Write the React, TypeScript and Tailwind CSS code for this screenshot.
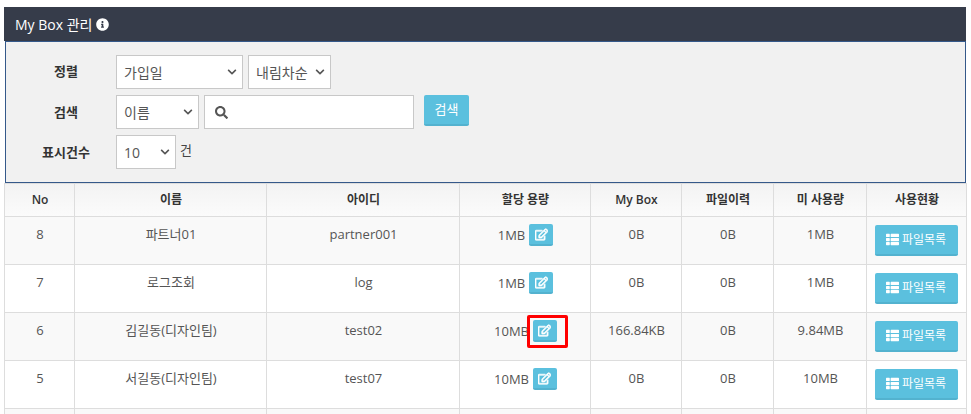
import { FaInfoCircle, FaSearch, FaChevronDown, FaThList, FaRegEdit } from "react-icons/fa";

const font = { fontFamily: '"Open Sans","Noto Sans CJK KR",sans-serif' };

function Sel({ label, w }: { label: string; w: string }) {
  return (
    <div className={`${w} h-[34px] flex items-center justify-between bg-white border border-[#c8c8c8] pl-[7px] pr-[5px] text-[14px] text-[#555]`}>
      <span>{label}</span>
      <FaChevronDown className="w-[10px] h-[10px] text-[#555]" />
    </div>
  );
}

const rows = [
  { no: "8", name: "파트너01", id: "partner001", quota: "1MB", box: "0B", hist: "0B", free: "1MB", alt: true },
  { no: "7", name: "로그조회", id: "log", quota: "1MB", box: "0B", hist: "0B", free: "1MB", alt: false },
  { no: "6", name: "김길동(디자인팀)", id: "test02", quota: "10MB", box: "166.84KB", hist: "0B", free: "9.84MB", alt: true, mark: true },
  { no: "5", name: "서길동(디자인팀)", id: "test07", quota: "10MB", box: "0B", hist: "0B", free: "10MB", alt: false },
];

const th = "border border-[#dddddd] font-semibold text-[12px] text-[#333] align-middle p-0 pl-[2px] h-[33px]";
const td = "border border-[#dddddd] text-[13px] text-[#555] align-top p-0 pt-[8px] text-center";
const tdText = `${td} pl-[2px]`;

export default function App() {
  return (
    <div style={font} className="w-[971px] h-[414px] overflow-hidden bg-white pt-[7px] pl-[4px]">
      <div className="w-[962px] h-[34px] bg-[#363c4a] text-white text-[14px] flex items-center gap-[4px] pl-[11px]">
        <span>My Box 관리</span>
        <FaInfoCircle className="w-[13px] h-[13px]" />
      </div>
      <div className="w-[961px] h-[142px] ml-px bg-[#f1f1f1] border border-[#35598a] pt-[13px] text-[#333]">
        <div className="flex flex-col gap-[6px]">
          <div className="flex items-center">
            <span className="w-[110px] text-center font-semibold text-[13px] pl-[10px] whitespace-nowrap">정렬</span>
            <div className="flex gap-[5px]">
              <Sel label="가입일" w="w-[127px]" />
              <Sel label="내림차순" w="w-[83px]" />
            </div>
          </div>
          <div className="flex items-center">
            <span className="w-[110px] text-center font-semibold text-[13px] pl-[10px] whitespace-nowrap pt-px">검색</span>
            <div className="flex gap-[5px] items-start">
              <Sel label="이름" w="w-[83px]" />
              <div className="w-[210px] h-[34px] bg-white border border-[#c8c8c8] flex items-center pl-[10px]">
                <FaSearch className="w-[13px] h-[13px] text-[#555]" />
              </div>
              <button className="ml-[5px] w-[45px] h-[31px] bg-[#5bc0de] border-b-2 border-[#53b2cf] rounded-[2px] text-white text-[13px]">검색</button>
            </div>
          </div>
          <div className="flex items-center">
            <span className="w-[110px] text-center font-semibold text-[13px] whitespace-nowrap pl-[10px] pt-px">표시건수</span>
            <Sel label="10" w="w-[60px]" />
            <span className="ml-[4px] text-[13px] text-[#444] -mt-[3px]">건</span>
          </div>
        </div>
      </div>
      <table className="table-fixed border-collapse w-[962px] -ml-[0.5px]">
        <colgroup>
          <col className="w-[70px]" />
          <col className="w-[192px]" />
          <col className="w-[193px]" />
          <col className="w-[131px]" />
          <col className="w-[91px]" />
          <col className="w-[92px]" />
          <col className="w-[93px]" />
          <col className="w-[100px]" />
        </colgroup>
        <thead>
          <tr className="bg-gradient-to-b from-[#f3f3f3] to-[#fbfbfb]">
            {["No", "이름", "아이디", "할당 용량", "My Box", "파일이력", "미 사용량", "사용현황"].map((h) => (
              <th key={h} className={th}>{h}</th>
            ))}
          </tr>
        </thead>
        <tbody>
          {rows.map((r) => (
            <tr key={r.no} className={`h-[48px] ${r.alt ? "bg-[#f9f9f9]" : "bg-white"}`}>
              <td className={tdText}>{r.no}</td>
              <td className={tdText}>{r.name}</td>
              <td className={tdText}>{r.id}</td>
              <td className={tdText}>
                <div className="flex items-start justify-center gap-[4px] -mt-[3px] relative">
                  <span className="pt-[4px]">{r.quota}</span>
                  <button className="w-[24px] h-[22px] mt-[2px] bg-[#5bc0de] border-b-2 border-[#53b2cf] rounded-[2px] flex items-center justify-center text-white">
                    <FaRegEdit className="w-[13px] h-[13px]" stroke="currentColor" strokeWidth={28} />
                  </button>
                  {r.mark && (
                    <div className="absolute left-[65px] -top-[3px] w-[41px] h-[33px] border-[3px] border-[#ff0000] rounded-[2px]" />
                  )}
                </div>
              </td>
              <td className={tdText}>{r.box}</td>
              <td className={tdText}>{r.hist}</td>
              <td className={tdText}>{r.free}</td>
              <td className={td}>
                <button className="mx-auto w-[83px] h-[31px] bg-[#5bc0de] border-b-2 border-[#53b2cf] rounded-[2px] flex items-center justify-center gap-[3px] text-white text-[12px]">
                  <FaThList className="w-[13px] h-[13px]" />
                  <span>파일목록</span>
                </button>
              </td>
            </tr>
          ))}
          <tr className="h-[10px] bg-[#f9f9f9]">
            {Array.from({ length: 8 }).map((_, i) => (
              <td key={i} className="border border-[#dddddd] p-0" />
            ))}
          </tr>
        </tbody>
      </table>
    </div>
  );
}
